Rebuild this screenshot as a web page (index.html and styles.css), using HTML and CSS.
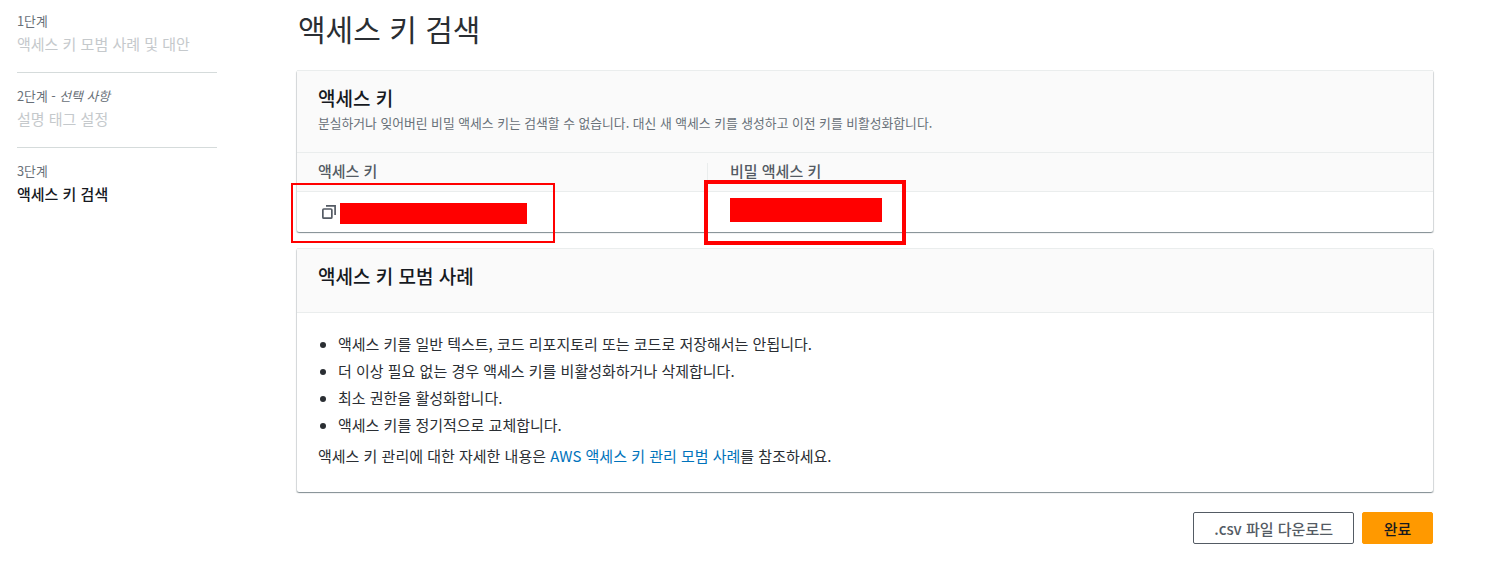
FILE: index.html
```html
<!DOCTYPE html>
<html lang="ko">
<head>
    <meta charset="UTF-8">
    <meta name="viewport" content="width=device-width, initial-scale=1.0">
    <title>액세스 키 검색</title>
    <link rel="stylesheet" href="styles.css">
</head>
<body>

<div class="page">
    <nav class="steps">
        <div class="step">
            <div class="step-label">1단계</div>
            <div class="step-name">액세스 키 모범 사례 및 대안</div>
        </div>
        <div class="step">
            <div class="step-label">2단계 - <em>선택 사항</em></div>
            <div class="step-name">설명 태그 설정</div>
        </div>
        <div class="step">
            <div class="step-label">3단계</div>
            <div class="step-name current">액세스 키 검색</div>
        </div>
    </nav>

    <main class="content">
        <h1>액세스 키 검색</h1>

        <section class="card keys-card">
            <div class="card-header">
                <h2>액세스 키</h2>
                <p>분실하거나 잊어버린 비밀 액세스 키는 검색할 수 없습니다. 대신 새 액세스 키를 생성하고 이전 키를 비활성화합니다.</p>
            </div>
            <div class="keys-head">
                <div class="keys-col">액세스 키</div>
                <div class="keys-col second">비밀 액세스 키</div>
            </div>
            <div class="keys-row">
                <div class="keys-col">
                    <svg class="copy-icon" width="14" height="14" viewBox="0 0 14 14" fill="none" stroke="#545b64" stroke-width="1.7">
                        <rect x="0.85" y="4" width="9" height="9.15" rx="1"></rect>
                        <path d="M4 0.9h9.1V10"></path>
                    </svg>
                    <span class="redact-fill access"></span>
                </div>
                <div class="keys-col second">
                    <span class="redact-fill secret"></span>
                </div>
            </div>
            <!-- red boxes drawn over the table -->
            <div class="redact-box thin"></div>
            <div class="redact-box thick"></div>
        </section>

        <section class="card">
            <div class="card-header tips-header">
                <h2>액세스 키 모범 사례</h2>
            </div>
            <div class="card-body">
                <ul>
                    <li>액세스 키를 일반 텍스트, 코드 리포지토리 또는 코드로 저장해서는 안됩니다.</li>
                    <li>더 이상 필요 없는 경우 액세스 키를 비활성화하거나 삭제합니다.</li>
                    <li>최소 권한을 활성화합니다.</li>
                    <li>액세스 키를 정기적으로 교체합니다.</li>
                </ul>
                <p>액세스 키 관리에 대한 자세한 내용은 <a href="#">AWS 액세스 키 관리 모범 사례</a>를 참조하세요.</p>
            </div>
        </section>

        <div class="actions">
            <button class="btn">.csv 파일 다운로드</button>
            <button class="btn primary">완료</button>
        </div>
    </main>
</div>

</body>
</html>
```

FILE: styles.css
```css
body {
    margin: 0;
    font-family: "Noto Sans CJK KR", "Noto Sans", sans-serif;
    font-size: 15px;
    color: #2a2e33;
    background-color: #fff;
}

.page {
    display: flex;
    height: 570px;
    overflow: hidden;
}

/* Left side steps */
.steps {
    width: 200px;
    margin-left: 17px;
    margin-right: 80px;
    padding-top: 11px;
}

.step {
    height: 61px;
    margin-bottom: 13px;
    border-bottom: 1px solid #d5dbdb;
}

.step:last-child {
    border-bottom: none;
}

.step-label {
    font-size: 12.8px;
    line-height: 20px;
    color: #687078;
}

.step-name {
    margin-top: 3px;
    line-height: 20px;
    color: #c5c9cc;
}

.step-name.current {
    color: #16191f;
    font-weight: 500;
}

/* Main content */
.content {
    width: 1136px;
}

h1 {
    margin: 9px 0 20px 1px;
    font-size: 30px;
    line-height: 38px;
    font-weight: 400;
    height: 41px;
}

.card {
    position: relative;
    margin-bottom: 16px;
    background-color: #fff;
    border-radius: 2px;
    box-shadow: 0 1px 1px 0 rgba(0, 28, 36, 0.3), 1px 1px 1px 0 rgba(0, 28, 36, 0.15), -1px 1px 1px 0 rgba(0, 28, 36, 0.15);
}

.card-header {
    height: 83px;
    box-sizing: border-box;
    padding: 15px 20px 0 21px;
    background-color: #fafafa;
    border-top: 1px solid #eaeded;
    border-bottom: 1px solid #eaeded;
}

.card-header h2 {
    margin: 0;
    font-size: 19px;
    line-height: 24px;
    font-weight: 500;
    color: #16191f;
}

.card-header p {
    margin: 3px 0 0;
    font-size: 12.8px;
    line-height: 20px;
    color: #687078;
}

.tips-header {
    height: 65px;
    padding-top: 15px;
}

.keys-head,
.keys-row {
    display: flex;
}

.keys-head {
    height: 39px;
    box-sizing: border-box;
    padding-top: 10px;
    background-color: #fafafa;
    border-bottom: 1px solid #eaeded;
    color: #545b64;
    font-weight: 500;
    line-height: 16px;
}

.keys-head .keys-col {
    height: 20px;
}

.keys-head .keys-col.second {
    border-left: 1px solid #eaeded;
    margin-left: -1px;
}

.keys-col {
    width: 411px;
    padding-left: 21px;
    box-sizing: border-box;
}

.keys-col.second {
    padding-left: 22px;
}

.keys-row {
    height: 40px;
}

.keys-row .keys-col {
    display: flex;
    align-items: center;
}

.copy-icon {
    margin-left: 4px;
    margin-right: 4px;
    flex: none;
}

.redact-fill {
    display: block;
    background-color: #f00;
}

.redact-fill.access {
    width: 187px;
    height: 21px;
    margin-top: 3px;
}

.redact-fill.secret {
    width: 152px;
    height: 24px;
    margin-top: -4px;
}

.redact-box {
    position: absolute;
    box-sizing: border-box;
    border-style: solid;
    border-color: #f00;
}

.redact-box.thin {
    left: -6px;
    top: 113px;
    width: 264px;
    height: 60px;
    border-width: 2px;
}

.redact-box.thick {
    left: 407px;
    top: 110px;
    width: 202px;
    height: 65px;
    border-width: 4px;
}

.card-body {
    height: 179px;
    box-sizing: border-box;
    padding: 17px 20px 0 21px;
    line-height: 27px;
}

.card-body ul {
    margin: 0;
    padding-left: 20px;
}

.card-body p {
    margin: 4px 0 0;
}

.card-body a {
    color: #0073bb;
    text-decoration: none;
}

/* Bottom buttons */
.actions {
    display: flex;
    justify-content: flex-end;
    gap: 8px;
    margin-top: 20px;
}

.btn {
    height: 32px;
    padding: 0 20px;
    font-family: inherit;
    font-size: 15px;
    font-weight: 500;
    color: #545b64;
    background-color: #fff;
    border: 1px solid #545b64;
    border-radius: 2px;
}

.btn.primary {
    width: 71px;
    padding: 0;
    color: #16191f;
    background-color: #ff9900;
    border-color: #ff9900;
}
```
